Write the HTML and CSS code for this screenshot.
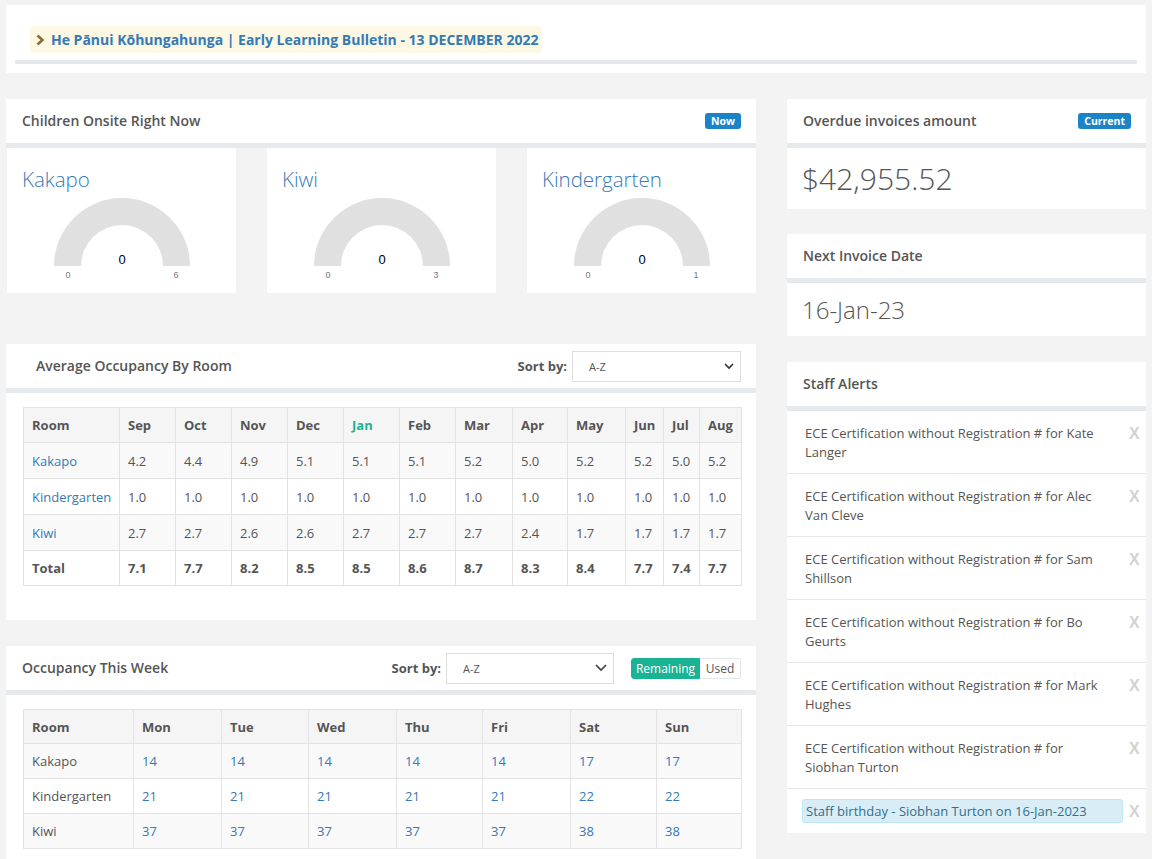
FILE: index.html
```html
<!DOCTYPE html>
<html lang="en">
<head>
<meta charset="utf-8">
<title>Dashboard</title>
<link rel="stylesheet" href="styles.css">
</head>
<body>
<div class="page">
  <div class="banner">
    <div class="notice">
      <svg class="chev" width="9" height="12" viewBox="0 0 9 12"><path d="M1.5 1.5 L6.5 6 L1.5 10.5" fill="none" stroke="#8a6d3b" stroke-width="2.6"/></svg>
      <span>He Pānui Kōhungahunga | Early Learning Bulletin - 13 DECEMBER 2022</span>
    </div>
    <div class="banner-line"></div>
  </div>

  <div class="main">
    <div class="col-left">
      <section class="panel onsite">
        <div class="phead"><h2>Children Onsite Right Now</h2><span class="badge">Now</span></div>
        <div class="cards">
          <div class="card">
            <div class="card-title">Kakapo</div>
            <svg class="gauge" width="160" height="92" viewBox="0 0 160 92"><path d="M12 78 A68 68 0 0 1 148 78 L121 78 A41 41 0 0 0 39 78 Z" fill="#e0e0e0"/><text x="80" y="76" class="gv">0</text><text x="26" y="90" class="gl">0</text><text x="134" y="90" class="gl">6</text></svg>
          </div>
          <div class="card">
            <div class="card-title">Kiwi</div>
            <svg class="gauge" width="160" height="92" viewBox="0 0 160 92"><path d="M12 78 A68 68 0 0 1 148 78 L121 78 A41 41 0 0 0 39 78 Z" fill="#e0e0e0"/><text x="80" y="76" class="gv">0</text><text x="26" y="90" class="gl">0</text><text x="134" y="90" class="gl">3</text></svg>
          </div>
          <div class="card">
            <div class="card-title">Kindergarten</div>
            <svg class="gauge" width="160" height="92" viewBox="0 0 160 92"><path d="M12 78 A68 68 0 0 1 148 78 L121 78 A41 41 0 0 0 39 78 Z" fill="#e0e0e0"/><text x="80" y="76" class="gv">0</text><text x="26" y="90" class="gl">0</text><text x="134" y="90" class="gl">1</text></svg>
          </div>
        </div>
      </section>

      <section class="panel avg">
        <div class="phead phead-avg"><h2>Average Occupancy By Room</h2>
          <div class="sort"><span class="sort-label">Sort by:</span><div class="select sel-avg"><span>A-Z</span><svg width="10" height="7" viewBox="0 0 10 7"><path d="M1 1 L5 5 L9 1" fill="none" stroke="#333" stroke-width="1.6"/></svg></div></div>
        </div>
        <div class="pbody avg-body">
          <table class="tbl tbl-avg">
            <colgroup><col style="width:96px"><col style="width:56px"><col style="width:56px"><col style="width:56px"><col style="width:56px"><col style="width:56px"><col style="width:56px"><col style="width:57px"><col style="width:55px"><col style="width:58px"><col style="width:38px"><col style="width:36px"><col style="width:42px"></colgroup>
            <thead><tr><th>Room</th><th>Sep</th><th>Oct</th><th>Nov</th><th>Dec</th><th class="cur">Jan</th><th>Feb</th><th>Mar</th><th>Apr</th><th>May</th><th>Jun</th><th>Jul</th><th>Aug</th></tr></thead>
            <tbody>
              <tr class="odd"><td class="lnk">Kakapo</td><td>4.2</td><td>4.4</td><td>4.9</td><td>5.1</td><td>5.1</td><td>5.1</td><td>5.2</td><td>5.0</td><td>5.2</td><td>5.2</td><td>5.0</td><td>5.2</td></tr>
              <tr><td class="lnk">Kindergarten</td><td>1.0</td><td>1.0</td><td>1.0</td><td>1.0</td><td>1.0</td><td>1.0</td><td>1.0</td><td>1.0</td><td>1.0</td><td>1.0</td><td>1.0</td><td>1.0</td></tr>
              <tr class="odd"><td class="lnk">Kiwi</td><td>2.7</td><td>2.7</td><td>2.6</td><td>2.6</td><td>2.7</td><td>2.7</td><td>2.7</td><td>2.4</td><td>1.7</td><td>1.7</td><td>1.7</td><td>1.7</td></tr>
              <tr class="total"><td>Total</td><td>7.1</td><td>7.7</td><td>8.2</td><td>8.5</td><td>8.5</td><td>8.6</td><td>8.7</td><td>8.3</td><td>8.4</td><td>7.7</td><td>7.4</td><td>7.7</td></tr>
            </tbody>
          </table>
        </div>
      </section>

      <section class="panel week">
        <div class="phead"><h2>Occupancy This Week</h2>
          <div class="sort"><span class="sort-label">Sort by:</span><div class="select sel-week"><span>A-Z</span><svg width="12" height="8" viewBox="0 0 12 8"><path d="M1 1 L6 6 L11 1" fill="none" stroke="#444" stroke-width="1.7"/></svg></div>
            <div class="toggle"><span class="on">Remaining</span><span class="off">Used</span></div>
          </div>
        </div>
        <div class="pbody week-body">
          <table class="tbl tbl-week">
            <colgroup><col style="width:110px"><col style="width:88px"><col style="width:87px"><col style="width:88px"><col style="width:86px"><col style="width:88px"><col style="width:86px"><col style="width:85px"></colgroup>
            <thead><tr><th>Room</th><th>Mon</th><th>Tue</th><th>Wed</th><th>Thu</th><th>Fri</th><th>Sat</th><th>Sun</th></tr></thead>
            <tbody>
              <tr class="odd"><td>Kakapo</td><td class="num">14</td><td class="num">14</td><td class="num">14</td><td class="num">14</td><td class="num">14</td><td class="num">17</td><td class="num">17</td></tr>
              <tr><td>Kindergarten</td><td class="num">21</td><td class="num">21</td><td class="num">21</td><td class="num">21</td><td class="num">21</td><td class="num">22</td><td class="num">22</td></tr>
              <tr class="odd"><td>Kiwi</td><td class="num">37</td><td class="num">37</td><td class="num">37</td><td class="num">37</td><td class="num">37</td><td class="num">38</td><td class="num">38</td></tr>
            </tbody>
          </table>
        </div>
      </section>
    </div>

    <div class="col-right">
      <section class="panel">
        <div class="phead"><h2>Overdue invoices amount</h2><span class="badge">Current</span></div>
        <div class="pbody big big-amount">$42,955.52</div>
      </section>
      <section class="panel">
        <div class="phead"><h2>Next Invoice Date</h2></div>
        <div class="pbody big big-date">16-Jan-23</div>
      </section>
      <section class="panel alerts">
        <div class="phead"><h2>Staff Alerts</h2></div>
        <ul class="alert-list">
          <li><span class="atext">ECE Certification without Registration # for Kate<br>Langer</span><span class="x">X</span></li>
          <li><span class="atext">ECE Certification without Registration # for Alec<br>Van Cleve</span><span class="x">X</span></li>
          <li><span class="atext">ECE Certification without Registration # for Sam<br>Shillson</span><span class="x">X</span></li>
          <li><span class="atext">ECE Certification without Registration # for Bo<br>Geurts</span><span class="x">X</span></li>
          <li><span class="atext">ECE Certification without Registration # for Mark<br>Hughes</span><span class="x">X</span></li>
          <li><span class="atext">ECE Certification without Registration # for<br>Siobhan Turton</span><span class="x">X</span></li>
          <li class="bday"><span class="bbox">Staff birthday - Siobhan Turton on 16-Jan-2023</span><span class="x">X</span></li>
        </ul>
      </section>
    </div>
  </div>
</div>
</body>
</html>
```

FILE: styles.css
```css
* { box-sizing: border-box; }
html, body { margin: 0; padding: 0; }
body {
  background: #f3f3f4;
  font-family: "Open Sans", "Liberation Sans", sans-serif;
  font-size: 13px;
  color: #555;
  width: 1152px;
  height: 859px;
  overflow: hidden;
}
.page { padding: 5px 6px 0 6px; }

.banner {
  background: #fff;
  padding: 21px 9px 9px 9px;
}
.notice {
  margin-left: 15px;
  display: inline-flex;
  align-items: center;
  height: 27px;
  width: 512px;
  background: #fcf8e3;
  border-radius: 4px;
  padding-left: 6px;
  color: #337ab7;
  font-weight: 700;
  font-size: 14px;
  white-space: nowrap;
}
.chev { margin-right: 6px; flex: none; }
.banner-line { height: 4px; background: #e6e9ec; margin-top: 7px; }

.main {
  display: grid;
  grid-template-columns: 750px 359px;
  column-gap: 31px;
  margin-top: 26px;
}
.col-left, .col-right { display: flex; flex-direction: column; }
.col-right .panel + .panel { margin-top: 25px; }
.col-right .alerts { margin-top: 26px !important; }

.phead {
  background: #fff;
  height: 49px;
  border-bottom: 5px solid #e7eaec;
  display: flex;
  align-items: center;
  justify-content: space-between;
  padding: 0 15px 0 16px;
}
.phead h2 {
  margin: -2px 0 0 0;
  font-size: 14px;
  font-weight: 600;
  color: #555;
}
.badge {
  background: #1c84c6;
  color: #fff;
  font-size: 10.5px;
  font-weight: 700;
  padding: 0 6px;
  height: 16px;
  line-height: 16px;
  border-radius: 3px;
  margin-top: -1px;
}
.pbody { background: #fff; }

.cards {
  display: grid;
  grid-template-columns: 229px 229px 229px;
  column-gap: 31px;
  padding-left: 1px;
}
.card {
  background: #fff;
  height: 145px;
  padding: 19px 15px 0 15px;
  display: flex;
  flex-direction: column;
}
.card-title {
  font-size: 20.5px;
  font-weight: 300;
  color: #337ab7;
  line-height: 24px;
  height: 21px;
}
.gauge { display: block; margin: 0 auto; flex: none; }
.gv { font-family: "Liberation Sans", Arial, sans-serif; font-size: 13px; fill: #000; text-anchor: middle; }
.gl { font-family: "Liberation Sans", Arial, sans-serif; font-size: 9px; fill: #777; text-anchor: middle; }

.avg { margin-top: 51px; }
.phead-avg { padding-left: 30px; }
.week { margin-top: 26px; }

.sort { display: flex; align-items: center; }
.sort-label { font-weight: 700; font-size: 13px; margin-right: 5px; color: #555; }
.select {
  height: 31px;
  border: 1px solid #ddd;
  display: flex;
  align-items: center;
  justify-content: space-between;
  padding: 0 6px 0 16px;
  font-size: 11px;
  color: #555;
  background: #fff;
}
.sel-avg { width: 169px; }
.sel-week { width: 168px; padding-right: 6px; }
.toggle {
  margin-left: 17px;
  display: flex;
  height: 21px;
  font-size: 12px;
  line-height: 19px;
}
.toggle .on {
  background: #1ab394;
  color: #fff;
  width: 69px;
  text-align: center;
  border: 1px solid #1ab394;
  border-radius: 3px 0 0 3px;
}
.toggle .off {
  background: #fff;
  color: #555;
  width: 41px;
  text-align: center;
  border: 1px solid #e5e6e7;
  border-left: none;
  border-radius: 0 3px 3px 0;
}

.avg-body { padding: 14px 15px 34px 17px; }
.week-body { padding: 14px 15px 20px 17px; }

.tbl {
  border-collapse: collapse;
  width: 718px;
  table-layout: fixed;
}
.tbl th, .tbl td {
  border: 1px solid #e3e3e3;
  text-align: left;
  padding: 0 8px;
  white-space: nowrap;
}
.tbl th {
  height: 35px;
  background: #f5f5f6;
  font-weight: 700;
  color: #555;
}
.tbl td { height: 36px; color: #555; }
.tbl tr.odd td { background: #f9f9f9; }
.tbl th.cur { color: #1ab394; }
.tbl td.lnk, .tbl td.num { color: #337ab7; }
.tbl tr.total td { font-weight: 700; height: 35px; }
.tbl-week th { height: 34px; }
.tbl-week td { height: 35px; }

.big {
  padding: 0 15px;
  font-weight: 300;
  color: #555;
  display: flex;
  align-items: center;
}
.big-amount { height: 61px; font-size: 30px; }
.big-date { height: 53px; font-size: 24px; }

.alert-list {
  list-style: none;
  margin: 0;
  padding: 0;
  background: #fff;
}
.alert-list li {
  display: flex;
  justify-content: space-between;
  align-items: flex-start;
  padding: 13px 5px 11px 18px;
  border-bottom: 1px solid #e7e7e7;
  line-height: 19px;
  min-height: 63px;
}
.alert-list li.bday {
  border-bottom: none;
  min-height: 0;
  padding: 10px 5px 10px 15px;
}
.atext { color: #555; }
.x {
  font-family: "Liberation Sans", Arial, sans-serif;
  font-weight: 700;
  font-size: 16px;
  color: #d2d2d2;
  line-height: 19px;
  width: 12px;
}
.bbox {
  width: 321px;
  height: 24px;
  line-height: 22px;
  background: #d9edf7;
  border: 1px solid #bce8f1;
  border-radius: 3px;
  color: #31708f;
  padding: 0 3px;
}
.bday .x { margin-top: 3px; }
```
